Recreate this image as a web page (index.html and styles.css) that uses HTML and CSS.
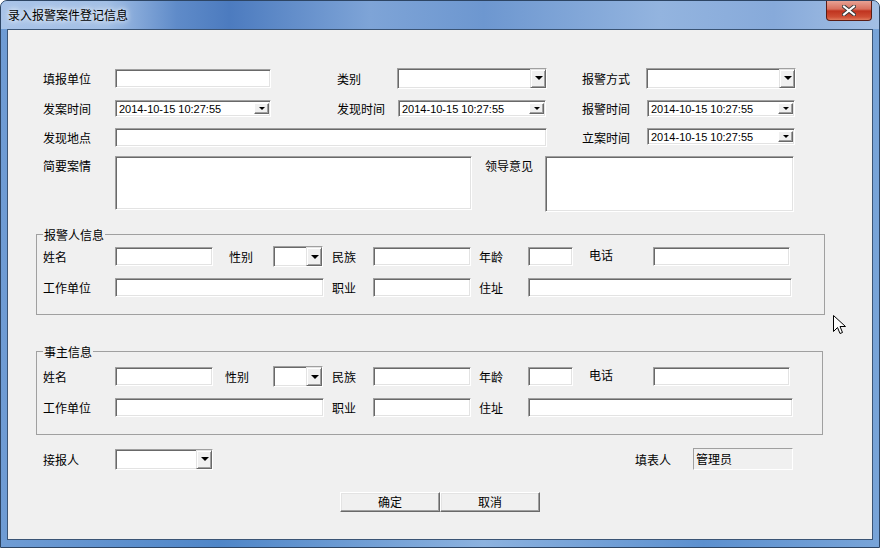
FILE: index.html
```html
<!DOCTYPE html>
<html lang="zh-CN">
<head>
    <meta charset="UTF-8">
    <title>录入报警案件登记信息</title>
    <link rel="stylesheet" href="styles.css">
</head>
<body>

<div class="window">
    <div class="titlebar">
        <span class="title">录入报警案件登记信息</span>
        <div class="close-btn">
            <svg width="14" height="11" viewBox="0 0 14 11">
                <path d="M2 1.5L12 9.5M12 1.5L2 9.5" stroke="#3a3a3a" stroke-width="4" stroke-linecap="square"/>
                <path d="M2 1.5L12 9.5M12 1.5L2 9.5" stroke="#fff" stroke-width="2" stroke-linecap="square"/>
            </svg>
        </div>
    </div>

    <div class="frame-body">
        <div class="client">

            <!-- case info -->
            <div class="top-grid">
                <span>填报单位</span>
                <input class="tb w156" type="text">
                <span>类别</span>
                <div class="combo w150"><span class="combo-btn"><i class="tri"></i></span></div>
                <span>报警方式</span>
                <div class="combo w150"><span class="combo-btn"><i class="tri"></i></span></div>

                <span>发案时间</span>
                <div class="date w156"><span class="date-text">2014-10-15 10:27:55</span><span class="date-btn"><i class="tri-s"></i></span></div>
                <span>发现时间</span>
                <div class="date w148 ml1"><span class="date-text">2014-10-15 10:27:55</span><span class="date-btn"><i class="tri-s"></i></span></div>
                <span>报警时间</span>
                <div class="date w148 ml1"><span class="date-text">2014-10-15 10:27:55</span><span class="date-btn"><i class="tri-s"></i></span></div>

                <span>发现地点</span>
                <input class="tb w432 span3" type="text">
                <span>立案时间</span>
                <div class="date w148 ml1 up1"><span class="date-text">2014-10-15 10:27:55</span><span class="date-btn"><i class="tri-s"></i></span></div>
            </div>

            <div class="memo-row">
                <span class="lbl">简要案情</span>
                <textarea class="tb memo-brief"></textarea>
                <span class="lbl-lead">领导意见</span>
                <textarea class="tb memo-lead"></textarea>
            </div>

            <!-- reporter -->
            <fieldset class="group group-reporter">
                <legend>报警人信息</legend>
                <div class="grp-row">
                    <span class="lbl">姓名</span>
                    <input class="tb w98" type="text">
                    <span class="lbl-sex">性别</span>
                    <div class="combo w50"><span class="combo-btn"><i class="tri"></i></span></div>
                    <span class="lbl-mid">民族</span>
                    <input class="tb w98" type="text">
                    <span class="lbl-age">年龄</span>
                    <input class="tb w45" type="text">
                    <span class="lbl-tel">电话</span>
                    <input class="tb w137" type="text">
                </div>
                <div class="grp-row">
                    <span class="lbl">工作单位</span>
                    <input class="tb w209" type="text">
                    <span class="lbl-mid">职业</span>
                    <input class="tb w98" type="text">
                    <span class="lbl-age">住址</span>
                    <input class="tb w264" type="text">
                </div>
            </fieldset>

            <!-- victim -->
            <fieldset class="group group-victim">
                <legend>事主信息</legend>
                <div class="grp-row">
                    <span class="lbl">姓名</span>
                    <input class="tb w98" type="text">
                    <span class="lbl-sex">性别</span>
                    <div class="combo w50"><span class="combo-btn"><i class="tri"></i></span></div>
                    <span class="lbl-mid">民族</span>
                    <input class="tb w98" type="text">
                    <span class="lbl-age">年龄</span>
                    <input class="tb w45" type="text">
                    <span class="lbl-tel">电话</span>
                    <input class="tb w137" type="text">
                </div>
                <div class="grp-row">
                    <span class="lbl">工作单位</span>
                    <input class="tb w209" type="text">
                    <span class="lbl-mid">职业</span>
                    <input class="tb w98" type="text">
                    <span class="lbl-age">住址</span>
                    <input class="tb w265" type="text">
                </div>
            </fieldset>

            <div class="footer-row">
                <span class="lbl">接报人</span>
                <div class="combo w98 h21"><span class="combo-btn"><i class="tri"></i></span></div>
                <span class="lbl-filler">填表人</span>
                <div class="readonly">管理员</div>
            </div>

            <div class="btn-row">
                <button class="btn">确定</button>
                <button class="btn">取消</button>
            </div>
        </div>
    </div>

    <svg class="cursor" width="13" height="20" viewBox="0 0 13 20">
        <path d="M0.5 0.5V16.5L4.5 12.5L7 18.5L9.5 17.5L7 11.5H12.5Z" fill="#fff" stroke="#000" stroke-width="1" stroke-linejoin="miter"/>
    </svg>
</div>

</body>
</html>
```

FILE: styles.css
```css
* {
    box-sizing: border-box;
}
body {
    margin: 0;
    font-family: "Noto Sans CJK SC", "Liberation Sans", sans-serif;
    font-size: 12px;
    color: #000;
    background: #fff;
}
.window {
    position: relative;
    width: 880px;
    height: 548px;
    border: 1px solid #2d4564;
    border-radius: 7px 7px 0 0;
    background: linear-gradient(90deg, #6f9cd4 0%, #4f86c8 25%, #8cb2df 55%, #5c90cf 80%, #78a4d8 100%);
    display: flex;
    flex-direction: column;
    overflow: hidden;
}
.titlebar {
    height: 28px;
    display: flex;
    align-items: center;
    padding-left: 7px;
    background: linear-gradient(90deg, #a9c4e8 0%, #a2bfe5 12%, #5f8bc9 20%, #4c7bbf 26%, #7ea4d7 42%, #6d97d0 55%, #93b4df 75%, #87aada 88%, #a3bfe4 100%);
}
.title {
    line-height: 14px;
    text-shadow: 0 0 5px #fff, 0 0 9px rgba(255, 255, 255, 0.8);
}
.close-btn {
    align-self: flex-start;
    margin: -1px 7px 0 auto;
    width: 46px;
    height: 21px;
    border: 1px solid #5a1c14;
    border-top: none;
    border-radius: 0 0 4px 4px;
    background: linear-gradient(180deg, #e9a89b 0%, #d8705e 45%, #c0341f 55%, #cf4f35 85%, #e07a5c 100%);
    display: flex;
    align-items: center;
    justify-content: center;
}
.frame-body {
    flex: 1;
    display: flex;
    padding: 0 6px 7px;
}
.client {
    flex: 1;
    background: #f0f0f0;
    border: 1px solid #3a5475;
    padding: 37px 0 0 28px;
}

/* controls */
.tb {
    display: block;
    height: 19px;
    margin: 0;
    padding: 0 3px;
    border: 1px solid;
    border-color: #a0a0a0 #fff #fff #a0a0a0;
    box-shadow: inset 1px 1px 0 #696969, inset -1px -1px 0 #e3e3e3;
    background: #fff;
    font: inherit;
    outline: none;
    resize: none;
    flex-shrink: 0;
}
.combo {
    display: flex;
    justify-content: flex-end;
    height: 21px;
    border: 1px solid;
    border-color: #a0a0a0 #fff #fff #a0a0a0;
    box-shadow: inset 1px 1px 0 #696969, inset -1px -1px 0 #e3e3e3;
    background: #fff;
    flex-shrink: 0;
}
.combo-btn {
    width: 16px;
    background: #f0f0f0;
    border: 1px solid;
    border-color: #e3e3e3 #696969 #696969 #e3e3e3;
    box-shadow: inset 1px 1px 0 #fff, inset -1px -1px 0 #a0a0a0;
    display: flex;
    align-items: center;
    justify-content: center;
}
.tri {
    width: 0;
    height: 0;
    border-left: 4px solid transparent;
    border-right: 4px solid transparent;
    border-top: 4px solid #000;
    margin-left: 1px;
}
.date {
    display: flex;
    align-items: center;
    height: 17px;
    padding: 0 1px 0 3px;
    border: 1px solid;
    border-color: #a0a0a0 #fff #fff #a0a0a0;
    box-shadow: inset 1px 1px 0 #696969, inset -1px -1px 0 #e3e3e3;
    background: #fff;
    font-family: "Liberation Sans", Arial, sans-serif;
    font-size: 11px;
}
.date-text {
    line-height: 13px;
    padding-top: 3px;
}
.date-btn {
    margin-left: auto;
    width: 15px;
    height: 11px;
    margin-top: 1px;
    background: #f0f0f0;
    border: 1px solid;
    border-color: #fff #696969 #696969 #fff;
    box-shadow: inset -1px -1px 0 #a0a0a0;
    display: flex;
    align-items: center;
    justify-content: center;
}
.tri-s {
    width: 0;
    height: 0;
    border-left: 3px solid transparent;
    border-right: 3px solid transparent;
    border-top: 3px solid #000;
}
.readonly {
    width: 100px;
    height: 22px;
    padding: 2px 0 0 2px;
    border: 1px solid;
    border-color: #a0a0a0 #fff #fff #a0a0a0;
    background: #f0f0f0;
    line-height: 16px;
}
.btn {
    width: 100px;
    height: 20px;
    padding: 0;
    background: #f0f0f0;
    border: 1px solid;
    border-color: #fff #696969 #696969 #fff;
    box-shadow: inset -1px -1px 0 #a0a0a0, inset 1px 1px 0 #e3e3e3;
    font: inherit;
    color: #000;
    line-height: 16px;
}

.w45 { width: 45px; }
.w50 { width: 50px; }
.w98 { width: 98px; }
.w137 { width: 137px; }
.w148 { width: 148px; }
.w150 { width: 150px; }
.w156 { width: 156px; }
.w209 { width: 209px; }
.w264 { width: 264px; }
.w265 { width: 265px; }
.w432 { width: 432px; }
.ml1 { margin-left: 1px; }
.up1 { margin-top: -2px; }
.span3 { grid-column: span 3; }

/* top section */
.top-grid {
    display: grid;
    grid-template-columns: 72px 222px 60px 185px 64px 150px;
    grid-template-rows: 22px 18px 20px;
    row-gap: 10px;
    align-items: center;
    padding-left: 7px;
}
.top-grid > span {
    white-space: nowrap;
}
.lbl {
    width: 72px;
    flex-shrink: 0;
    white-space: nowrap;
}
.memo-row {
    display: flex;
    align-items: flex-start;
    margin-top: 9px;
    padding-left: 7px;
    line-height: 20px;
}
.memo-brief {
    width: 357px;
    height: 54px;
}
.lbl-lead {
    margin-left: 13px;
    width: 60px;
}
.memo-lead {
    width: 249px;
    height: 56px;
}

/* group boxes */
.group {
    margin: 16px 0 0;
    border: 1px solid #a0a0a0;
    padding: 5px 0 16px 6px;
    min-width: 0;
}
.group legend {
    padding: 0 1px;
    line-height: 13px;
}
.group-reporter {
    width: 789px;
}
.group-victim {
    width: 787px;
    margin-top: 30px;
    padding-top: 8px;
}
.grp-row {
    display: flex;
    align-items: center;
    height: 21px;
}
.grp-row + .grp-row {
    margin-top: 10px;
}
.lbl-sex {
    margin-left: 16px;
    width: 44px;
}
.group-victim .lbl-sex {
    margin-left: 12px;
    width: 48px;
}
.lbl-mid {
    margin-left: 9px;
    width: 41px;
}
.grp-row + .grp-row .lbl-mid {
    margin-left: 8px;
}
.lbl-age {
    margin-left: 8px;
    width: 49px;
}
.lbl-tel {
    margin-left: 16px;
    width: 64px;
    margin-top: -4px;
}

/* bottom */
.footer-row {
    display: flex;
    align-items: center;
    height: 22px;
    margin-top: 13px;
    padding-left: 7px;
}
.lbl-filler {
    margin-left: 422px;
    width: 58px;
}
.btn-row {
    display: flex;
    margin: 22px 0 0 304px;
}

.cursor {
    position: absolute;
    left: 832px;
    top: 314px;
}
```
